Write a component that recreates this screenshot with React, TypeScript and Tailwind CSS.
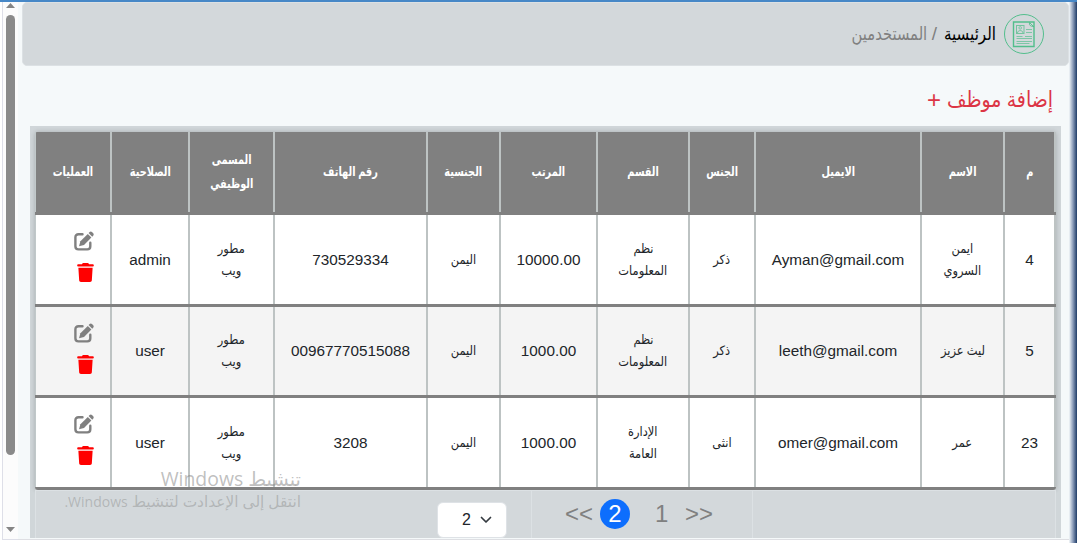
import { FaTrash } from "react-icons/fa6";

const cols = "grid grid-cols-[53px_83px_166px_66px_92px_97px_73px_153px_85px_78px_75px]";

const headers = [
  ["م"], ["الاسم"], ["الايميل"], ["الجنس"], ["القسم"], ["المرتب"],
  ["الجنسية"], ["رقم الهاتف"], ["المسمى", "الوظيفي"], ["الصلاحية"], ["العمليات"],
];

const rows = [
  [["4"], ["ايمن", "السروي"], ["Ayman@gmail.com"], ["ذكر"], ["نظم", "المعلومات"], ["10000.00"], ["اليمن"], ["730529334"], ["مطور", "ويب"], ["admin"]],
  [["5"], ["ليث عزيز"], ["leeth@gmail.com"], ["ذكر"], ["نظم", "المعلومات"], ["1000.00"], ["اليمن"], ["00967770515088"], ["مطور", "ويب"], ["user"]],
  [["23"], ["عمر"], ["omer@gmail.com"], ["انثى"], ["الإدارة", "العامة"], ["1000.00"], ["اليمن"], ["3208"], ["مطور", "ويب"], ["user"]],
];

const rowStyles = ["h-[92px] bg-white", "h-[91px] bg-[#f4f4f4]", "h-[92px] bg-white rounded-b-[3px]"];

const isLatin = (s: string) => /[0-9A-Za-z]/.test(s);

function ResumeIcon() {
  return (
    <svg width="40" height="40" viewBox="0 0 40 40" fill="none" stroke="#52be8c" className="shrink-0">
      <circle cx="20" cy="20" r="19.5" strokeWidth="1" />
      <path d="M9.500 8h20.500V32.500H9.500z" strokeWidth="1.400" />
      <path d="M25.500 8.500l4.500 4.500M25.500 8.500q-1 4 4.500 4" strokeWidth="0.900" />
      <g opacity="0.75">
        <rect x="12.500" y="11.500" width="7.500" height="8" strokeWidth="1" />
        <circle cx="16.200" cy="13.900" r="1.300" strokeWidth="0.900" />
        <path d="M13.500 19c0-3.200 5.500-3.200 5.500 0" strokeWidth="1" />
        <path d="M22 15.500h6M22 18.500h6M12.500 22.500h6M21 22.500h7M12.500 24.500h15.500M12.500 27.500h15.500M12.500 29.500h13" strokeWidth="0.900" />
      </g>
    </svg>
  );
}

function EditIcon() {
  return (
    <svg width="20" height="20" viewBox="0 0 20 20" fill="none" className="block">
      <path d="M8.500 3.300H4.500Q1.400 3.300 1.400 6.300V15.300Q1.400 18.400 4.500 18.400H13.300Q16.300 18.400 16.300 15.300V11.800" stroke="#808080" strokeWidth="2.400" strokeLinecap="round" />
      <path d="M13.800 2.900l3.600 3.600-7.400 7.400-5 1.400 1.400-5z" fill="#808080" />
      <path d="M14.600 2.100l1-1q1.200-1 2.400 0l1.200 1.200q1 1.200 0 2.400l-1 1z" fill="#808080" />
    </svg>
  );
}

export default function App() {
  return (
    <div className="relative flex h-[543px] w-[1077px] overflow-hidden border-t-2 border-[#4788c7] bg-white font-['Liberation_Sans','DejaVu_Sans',sans-serif]">
      <div className="ml-[2px] flex h-[538px] w-4 shrink-0 flex-col items-center border-b border-l border-[#dedfe8] bg-[#fcfcfc]">
        <svg width="9" height="5" className="mt-[1px] shrink-0"><path d="M0 5L4.500 0L9 5z" fill="#858585" /></svg>
        <div className="mt-[7px] h-[440px] w-[9px] shrink-0 rounded-full bg-[#8a8a8a]" />
        <svg width="9" height="5" className="mt-[72px] shrink-0"><path d="M0 0L4.500 5L9 0z" fill="#858585" /></svg>
      </div>
      <main dir="rtl" className="flex h-[538px] min-w-0 flex-1 flex-col border-b border-[#dedfe3] bg-[#f5f9fa]">
        <div className="flex">
          <div className="h-[541px] w-[8px] shrink-0 bg-linear-to-l from-[#f5f9fa] via-[#8a9bb8] to-[#203d68] [direction:ltr] rotate-180" />
          <div className="flex min-w-0 flex-1 flex-col">
            <nav className="ml-[4px] flex h-[64px] items-center rounded-[5px] border border-[#dce1e4] bg-[#d3d8db] pr-[24px] text-[18px]">
              <ResumeIcon />
              <span className="mr-[8px] w-[53px] origin-right scale-x-[.84] whitespace-nowrap text-black">الرئيسية</span>
              <span className="ml-[4px] mr-[6px] text-[19px] text-[#808080]">/</span>
              <span className="origin-right scale-x-[.82] whitespace-nowrap text-[#808080]">المستخدمين</span>
            </nav>
            <h1 className="mt-[16px] flex h-[44px] pr-[16px] text-[22px] leading-[35px] text-[#dc3545]">
              <span className="w-[112px] origin-right scale-x-[.86] whitespace-nowrap">إضافة موظف</span>
              <span className="text-[24px]">+</span>
            </h1>
            <section className="mr-[8px] h-[412px] w-[1031px] bg-[#d0d6d9] pr-[5px] pt-[6px]">
              <div className="h-[358px] w-[1021px] rounded-[3px] shadow-[0_0_5px_#0003]">
                <div className={`${cols} h-[83px] rounded-t-[2px] border-b-[3px] border-[#808080] bg-[#808080] text-[13px] font-bold text-white`}>
                  {headers.map((h, i) => (
                    <div key={i} className={`flex flex-col items-center justify-center whitespace-nowrap leading-[24px] ${i < 10 ? "border-l-2 border-[#bdc3c3]" : "border-l border-[#c0c8c9]"} ${i === 0 ? "border-r-2" : ""}`}>
                      {h.map((l) => <span key={l} className="scale-x-[.75]">{l}</span>)}
                    </div>
                  ))}
                </div>
                {rows.map((r, i) => (
                  <div key={i} className={`${cols} ${rowStyles[i]} border-b-[3px] border-[#808080] text-[#212529]`}>
                    {r.map((c, j) => (
                      <div key={j} className={`flex flex-col items-center justify-center whitespace-nowrap border-l-2 border-[#bdc3c3] leading-[22px] ${j === 0 ? "border-r-2" : ""} ${isLatin(c[0]) ? "text-[15.3px]" : "text-[13px]"}`}>
                        {c.map((l) => <span key={l} className={isLatin(l) ? "" : "scale-x-[.88]"}>{l}</span>)}
                      </div>
                    ))}
                    <div className="flex flex-col items-start border-l border-[#c0c8c9] pr-[16px] pt-[16px]">
                      <EditIcon />
                      <FaTrash className="mt-[12px] h-[19px] w-[17px] text-[#ff0000]" />
                    </div>
                  </div>
                ))}
              </div>
              <footer className="ml-[5px] flex h-[48px] border-x border-t border-[#dce1e4] bg-[#d3d8db] text-[#808080]">
                <div className="w-[303px] border-l border-[#dce1e4]" />
                <div dir="ltr" className="flex w-[221px] items-center border-l border-[#dce1e4] pb-[1px] pl-[33px] text-[24px]">
                  <span className="w-[28px]">&lt;&lt;</span>
                  <span className="ml-[7px] flex size-[30px] items-center justify-center rounded-full bg-[#0d6efd] text-white">2</span>
                  <span className="ml-[25px] w-[14px]">1</span>
                  <span className="ml-[16px]">&gt;&gt;</span>
                </div>
                <div dir="ltr" className="mr-[24px] mt-[11px] flex h-[36px] w-[70px] items-center rounded-[6px] border border-[#dee2e6] bg-white pl-[24px] text-[16px] text-[#212529]">
                  2
                  <svg width="12" height="8" viewBox="0 0 12 8" fill="none" stroke="#343a40" strokeWidth="1.700" strokeLinecap="round" strokeLinejoin="round" className="ml-[9px]"><path d="M1.500 1.500L6 6l4.500-4.500" /></svg>
                </div>
              </footer>
            </section>
          </div>
        </div>
      </main>
      <div dir="rtl" className="pointer-events-none absolute left-[64px] top-[464px] w-[237px] whitespace-nowrap font-['Open_Sans','DejaVu_Sans',sans-serif]">
        <div className="text-[19.4px] leading-[26px] text-[#808080]/50">تنشيط Windows</div>
        <div className="text-[15.4px] leading-[20px] text-[#808080]/40">انتقل إلى الإعدادت لتنشيط <span className="text-[14px]">Windows.</span></div>
      </div>
    </div>
  );
}
